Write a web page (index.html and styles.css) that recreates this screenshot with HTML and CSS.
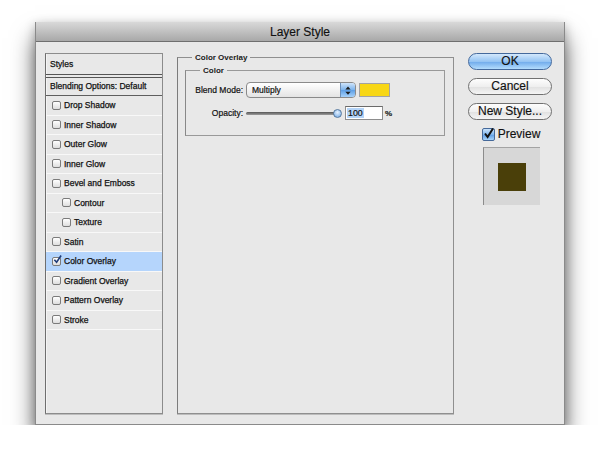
FILE: index.html
```html
<!DOCTYPE html>
<html>
<head>
<meta charset="utf-8">
<title>Layer Style</title>
<link rel="stylesheet" href="styles.css">
</head>
<body>
<div class="window">
  <div class="titlebar">Layer Style</div>
  <div class="content">
    <div class="styles-list">
      <div class="list-head">Styles</div>
      <div class="list-blend">Blending Options: Default</div>
      <div class="row"><span class="cb"></span>Drop Shadow</div>
      <div class="row"><span class="cb"></span>Inner Shadow</div>
      <div class="row"><span class="cb"></span>Outer Glow</div>
      <div class="row"><span class="cb"></span>Inner Glow</div>
      <div class="row"><span class="cb"></span>Bevel and Emboss</div>
      <div class="row sub"><span class="cb"></span>Contour</div>
      <div class="row sub"><span class="cb"></span>Texture</div>
      <div class="row"><span class="cb"></span>Satin</div>
      <div class="row selected"><span class="cb checked"><svg viewBox="0 0 10 10" width="9" height="9"><path d="M1.5 5.2 L4 8 L9 0.5" fill="none" stroke="#1f3c78" stroke-width="1.8"/></svg></span>Color Overlay</div>
      <div class="row"><span class="cb"></span>Gradient Overlay</div>
      <div class="row"><span class="cb"></span>Pattern Overlay</div>
      <div class="row"><span class="cb"></span>Stroke</div>
    </div>

    <fieldset class="group outer">
      <legend>Color Overlay</legend>
      <fieldset class="group inner">
        <legend>Color</legend>
        <div class="form">
          <span class="label">Blend Mode:</span>
          <div class="ctrl">
            <div class="select">
              <span class="select-text">Multiply</span>
              <span class="select-arrows"><svg viewBox="0 0 8 12" width="6" height="9"><path d="M4 0.5 L7.5 4.5 H0.5 Z M4 11.5 L7.5 7.5 H0.5 Z" fill="#1b1b1b"/></svg></span>
            </div>
            <div class="swatch"></div>
          </div>
          <span class="label">Opacity:</span>
          <div class="ctrl">
            <div class="slider"><div class="track"></div><div class="knob"></div></div>
            <div class="input"><span class="sel">100</span></div>
            <span class="pct">%</span>
          </div>
        </div>
      </fieldset>
    </fieldset>

    <div class="actions">
      <div class="btn default">OK</div>
      <div class="btn">Cancel</div>
      <div class="btn">New Style...</div>
      <div class="preview-row">
        <span class="pcheck"><svg viewBox="0 0 13 13" width="13" height="13"><path d="M3 6.5 L5.6 10 L11 1.5" fill="none" stroke="#111" stroke-width="2"/></svg></span>
        <span>Preview</span>
      </div>
      <div class="preview-box"><div class="preview-swatch"></div></div>
    </div>
  </div>
</div>
</body>
</html>
```

FILE: styles.css
```css
html, body {
  margin: 0;
  background: #ffffff;
  font-family: "Liberation Sans", Arial, sans-serif;
  color: #1a1a1a;
}

.window {
  margin: 22px 0 0 35px;
  width: 530px;
  height: 403px;
  box-sizing: border-box;
  background: #e8e8e8;
  border: 1px solid #8a8a8a;
  border-top: none;
  box-shadow: 0 16px 22px rgba(0, 0, 0, 0.6), 0 3px 10px rgba(0, 0, 0, 0.25);
  display: flex;
  flex-direction: column;
}

.titlebar {
  height: 20px;
  box-sizing: border-box;
  border-bottom: 1px solid #6f6f6f;
  background: linear-gradient(#d9d9d9, #a8a8a8);
  font-size: 12px;
  line-height: 20px;
  text-align: center;
  color: #111;
  -webkit-text-stroke: 0.15px #111;
}

.content {
  flex: 1;
  display: flex;
  gap: 14px;
  padding: 11px 12px 10px 9px;
}

/* Styles list */
.styles-list {
  width: 118px;
  box-sizing: border-box;
  border: 1px solid #8c8c8c;
  border-left-color: #6e6e6e;
  box-shadow: 0 1px 0 #bdbdbd, inset 1px 0 0 #f4f4f4;
  background: #e8e8e8;
  font-size: 8.5px;
  color: #111;
  -webkit-text-stroke: 0.25px #111;
}

.list-head {
  height: 20px;
  line-height: 20px;
  padding-left: 4px;
  border-bottom: 4px double #555;
}

.list-blend {
  height: 18px;
  line-height: 17px;
  box-sizing: border-box;
  padding-left: 4px;
  border-bottom: 1px solid #5e5e5e;
}

.row {
  height: 19.5px;
  box-sizing: border-box;
  border-bottom: 1px solid #f8f8f8;
  display: flex;
  align-items: center;
  gap: 3px;
  padding-left: 6px;
}

.row.sub {
  padding-left: 16px;
}

.row.selected {
  background: #b5d5fc;
}

.cb {
  width: 9px;
  height: 9px;
  box-sizing: border-box;
  border: 1px solid #7b7b7b;
  border-radius: 2px;
  background: linear-gradient(#ffffff, #dedede);
  display: flex;
  align-items: center;
  justify-content: center;
  overflow: visible;
  -webkit-text-stroke: 0;
}

.cb.checked svg {
  margin-top: -3px;
  margin-left: 2px;
  flex: none;
}

/* Group boxes */
.group {
  margin: 0;
  min-inline-size: 0;
  box-sizing: border-box;
}

.group legend {
  font-size: 8px;
  font-weight: bold;
  line-height: 9px;
  padding: 0 3px;
  color: #1a1a1a;
}

.outer {
  width: 277px;
  border: 1px solid #8f8f8f;
  border-left-color: #7c7c7c;
  box-shadow: 0 1px 0 #bcbcbc;
  padding: 4px 8px 0 7px;
}

.outer > legend {
  margin-left: 7px;
}

.inner {
  border: 1px solid #999;
  border-left-color: #888;
  padding: 7px 8px 15px 9px;
}

.inner > legend {
  margin-left: 5px;
}

.form {
  display: grid;
  grid-template-columns: 48px auto;
  column-gap: 3px;
  row-gap: 8px;
  align-items: center;
  font-size: 8.5px;
  color: #111;
  -webkit-text-stroke: 0.2px #111;
}

.label {
  text-align: right;
  white-space: nowrap;
}

.ctrl {
  display: flex;
  align-items: center;
}

.select {
  width: 110px;
  height: 16px;
  box-sizing: border-box;
  border: 1px solid #8a8a8a;
  border-radius: 4px;
  background: linear-gradient(#ffffff, #e4e4e4);
  display: flex;
  align-items: center;
  overflow: hidden;
}

.select-text {
  padding-left: 5px;
}

.select-arrows {
  margin-left: auto;
  width: 15px;
  height: 100%;
  box-sizing: border-box;
  border-left: 1px solid #6d8fb8;
  background: linear-gradient(#cfe4fa, #79b2ec 50%, #5d9fe6 51%, #a7d2fb);
  display: flex;
  align-items: center;
  justify-content: center;
}

.swatch {
  width: 31px;
  height: 14px;
  box-sizing: border-box;
  margin-left: 3px;
  background: #f8d716;
  border: 1px solid #a3a3a3;
}

.slider {
  width: 96px;
  display: flex;
  align-items: center;
}

.track {
  flex: 1;
  height: 3px;
  border-radius: 2px;
  background: linear-gradient(#555, #9d9d9d);
}

.knob {
  width: 9px;
  height: 9px;
  box-sizing: border-box;
  margin-left: -2px;
  border-radius: 50%;
  border: 1px solid #55799f;
  background: radial-gradient(circle at 50% 35%, #e4f1ff, #6ea6e4);
}

.input {
  width: 38px;
  height: 14px;
  box-sizing: border-box;
  margin-left: 3px;
  border: 1px solid #8d8d8d;
  border-top-color: #6b6b6b;
  background: #fff;
  display: flex;
  align-items: center;
  padding-left: 1px;
  font-size: 8.8px;
}

.sel {
  background: #b4d4f8;
  padding: 0 1px;
}

.pct {
  margin-left: 2px;
  font-size: 8px;
  font-weight: bold;
  color: #333;
}

/* Right column */
.actions {
  width: 84px;
  display: flex;
  flex-direction: column;
  align-items: center;
}

.btn {
  width: 84px;
  height: 17px;
  box-sizing: border-box;
  margin-bottom: 8px;
  border: 1px solid #707070;
  border-radius: 9px;
  background: linear-gradient(#fdfdfd 0%, #efefef 50%, #e0e0e0 51%, #f5f5f5 100%);
  font-size: 12px;
  line-height: 15px;
  text-align: center;
  color: #111;
  -webkit-text-stroke: 0.15px #111;
}

.btn.default {
  border-color: #44699c;
  background: linear-gradient(#d3e8fc 0%, #95c4f3 50%, #6ea9ea 51%, #b3dcfd 100%);
}

.preview-row {
  display: flex;
  align-items: center;
  gap: 3px;
  font-size: 12px;
  margin-top: -1px;
  margin-left: 2px;
  color: #111;
  -webkit-text-stroke: 0.15px #111;
}

.pcheck {
  width: 13px;
  height: 13px;
  box-sizing: border-box;
  border: 1px solid #45699a;
  border-radius: 2px;
  background: linear-gradient(#cbe3fb, #7fb6ee 50%, #5b9be4 51%, #a8d4fb);
  display: flex;
  align-items: center;
  justify-content: center;
  overflow: visible;
}

.pcheck svg {
  flex: none;
  margin-top: -2px;
}

.preview-box {
  width: 57px;
  height: 58px;
  box-sizing: border-box;
  margin-top: 6px;
  margin-left: 3px;
  background: #d7d7d7;
  border-left: 1px solid #8c8c8c;
  border-top: 1px solid #a3a3a3;
  display: flex;
  align-items: center;
  justify-content: center;
}

.preview-swatch {
  width: 28px;
  height: 28px;
  background: #4a3f09;
}
```
